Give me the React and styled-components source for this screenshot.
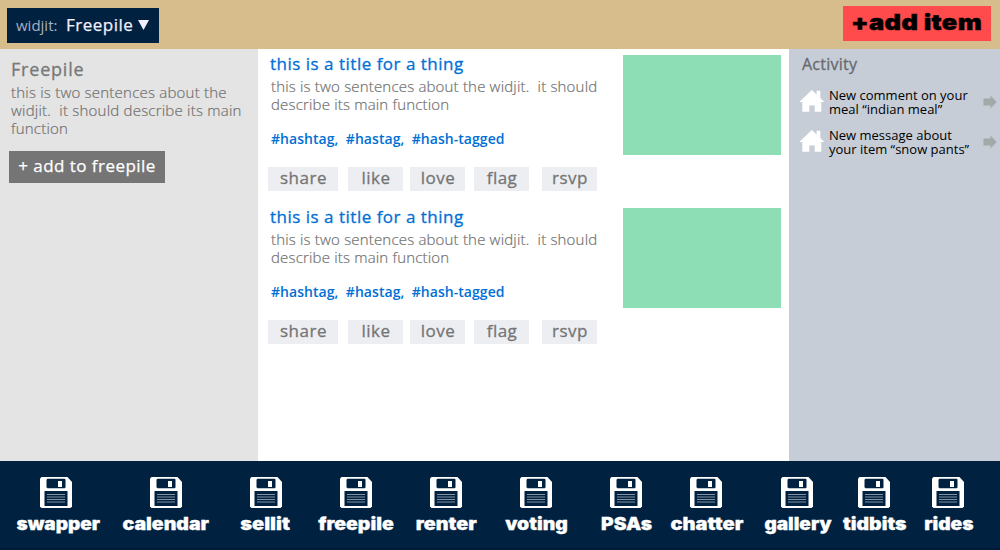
import React from "react";
import styled, { createGlobalStyle } from "styled-components";

const GlobalStyle = createGlobalStyle`
  * { box-sizing: border-box; }
  body { margin: 0; font-family: "Open Sans", "Noto Sans", sans-serif; }
  h1, h2, p { margin: 0; }
  button { border: 0; padding: 0; font: inherit; display: block; white-space: nowrap; }
`;

const Page = styled.div`
  width: 1000px;
  height: 550px;
  overflow: hidden;
  display: flex;
  flex-direction: column;
  background: #fff;
`;

const TopBar = styled.header`
  height: 49px;
  flex: none;
  display: flex;
  justify-content: space-between;
  align-items: flex-start;
  padding: 6px 9px 0 7px;
  background: #d7bc8c;
`;

const WidjitPicker = styled.button`
  width: 152px;
  height: 35px;
  margin-top: 2px;
  display: flex;
  align-items: center;
  padding: 0 0 2px 9px;
  text-align: left;
  background: #00213f;
  color: #f2effc;
  font-size: 17px;
  letter-spacing: 0.5px;
  -webkit-text-stroke: 0.25px;
`;

const PickerPrefix = styled.span`
  width: 50px;
  padding-top: 1px;
  font-size: 15px;
  letter-spacing: 0;
  color: #a8b0c0;
  -webkit-text-stroke: 0;
`;

const PickerArrow = styled.svg`
  width: 11px;
  height: 10px;
  margin: 1px 0 0 5px;
  fill: #f2effc;
`;

const AddItem = styled.button`
  width: 148px;
  height: 35px;
  padding-bottom: 2px;
  background: #ff4b4b;
  color: #000;
  font-family: Inter, "Liberation Sans", sans-serif;
  font-weight: 900;
  font-size: 22px;
  line-height: 33px;
  letter-spacing: 0.3px;
`;

const AddItemText = styled.span`
  display: inline-block;
  transform: scaleX(1.16);
  -webkit-text-stroke: 0.4px;
`;

const Columns = styled.div`
  height: 412px;
  flex: none;
  display: flex;
`;

const Sidebar = styled.aside`
  width: 258px;
  padding: 8px 0 0 11px;
  background: #e4e4e4;
  color: #787878;
`;

const SidebarTitle = styled.h1`
  margin-bottom: 2px;
  font-size: 18px;
  line-height: 24px;
  font-weight: 400;
  letter-spacing: 0.8px;
  -webkit-text-stroke: 0.3px;
`;

const Description = styled.p`
  font-size: 15px;
  line-height: 18px;
  font-weight: 300;
  color: #707070;
  white-space: pre;
  letter-spacing: ${(p) => p.$spacing || 0.18}px;
  -webkit-text-stroke: 0.2px;
`;

const AddToPile = styled.button`
  width: 156px;
  height: 32px;
  margin: 14px 0 0 -2px;
  padding-bottom: 2px;
  background: #757575;
  color: #fff;
  font-size: 17px;
  line-height: 28px;
  letter-spacing: 0.45px;
  -webkit-text-stroke: 0.25px;
`;

const Feed = styled.main`
  width: 531px;
  padding: 6px 8px 0 10px;
`;

const Post = styled.article`
  height: 153px;
  display: flex;
  justify-content: space-between;
  align-items: flex-start;
`;

const PostBody = styled.div`
  width: 340px;
  padding-left: 3px;
`;

const PostTitle = styled.h2`
  margin: -3px 0 1px -1px;
  font-size: 17px;
  line-height: 24px;
  font-weight: 400;
  letter-spacing: 0.5px;
  color: #006fd6;
  -webkit-text-stroke: 0.3px;
`;

const Tags = styled.p`
  margin-top: 17px;
  font-size: 14px;
  line-height: 18px;
  font-weight: 600;
  letter-spacing: 0.05px;
  color: #006fd6;
  white-space: pre;
`;

const Actions = styled.div`
  display: flex;
  margin: 19px 0 0 -3px;
`;

const Action = styled.button`
  width: ${(p) => p.$width}px;
  height: 24px;
  margin-right: ${(p) => p.$gap}px;
  padding: 0 0 2px 1px;
  background: #edeef2;
  color: #757575;
  font-size: 17px;
  line-height: 20px;
  letter-spacing: 0.5px;
  -webkit-text-stroke: 0.3px;
`;

const Thumb = styled.div`
  width: 158px;
  height: 100px;
  background: #8ddeb4;
`;

const ActivityPanel = styled.aside`
  width: 211px;
  padding: 5px 3px 0 12px;
  background: #c7cdd6;
`;

const ActivityTitle = styled.h2`
  padding-left: 1px;
  margin: -1px 0 11px;
  font-size: 16px;
  line-height: 22px;
  font-weight: 400;
  letter-spacing: 0.25px;
  color: #66696e;
  -webkit-text-stroke: 0.3px;
`;

const ActivityRow = styled.div`
  height: 40px;
  display: flex;
  align-items: flex-start;
`;

const HouseIcon = styled.svg`
  width: 24px;
  height: 24px;
  margin: 3px 5px 0 -1px;
  fill: #fff;
`;

const ActivityText = styled.p`
  flex: 1;
  padding-top: 2px;
  font-size: 13px;
  line-height: 14px;
  color: #000;
  white-space: pre;
`;

const ArrowIcon = styled.svg`
  width: 14px;
  height: 14px;
  margin-top: 9px;
  fill: #a3a8a9;
`;

const Dock = styled.nav`
  height: 89px;
  flex: none;
  display: flex;
  padding: 16px 0 0 16px;
  background: #00213f;
  border-bottom: 2px solid #001a38;
`;

const DockItem = styled.a`
  width: ${(p) => p.$width}px;
  margin-right: ${(p) => p.$gap}px;
  flex: none;
  display: flex;
  flex-direction: column;
  align-items: center;
`;

const DockLabel = styled.span`
  margin-top: 5px;
  font-family: Inter, "Liberation Sans", sans-serif;
  font-size: 17px;
  line-height: 22px;
  font-weight: 900;
  white-space: nowrap;
  color: #fff;
  transform: scaleX(${(p) => p.$stretch});
  -webkit-text-stroke: 0.3px;
`;

const FloppyIcon = styled.svg`
  width: 32px;
  height: 31px;
  flex: none;
  margin-left: ${(p) => p.$shift || 0}px;
`;

const Floppy = ({ shift }) => (
  <FloppyIcon viewBox="0 0 32 31" $shift={shift}>
    <path d="M1.5 0H27.5L32 5V29.5L30.5 31H1.5L0 29.5V1.5Z" fill="#fff" />
    <path d="M7.5 1.7H24.7L25.5 2.5V10.5L24.7 11.3H7.5L6.5 10.3V2.7Z" fill="#00213f" />
    <rect x="18" y="4" width="4" height="6" fill="#fff" />
    <rect x="4.5" y="14" width="23" height="15" fill="#00213f" />
    <path d="M7 17.5H25M7 20H25M7 22.5H25M7 25H25" stroke="#8292a1" strokeWidth="1.2" />
  </FloppyIcon>
);

const actions = [
  ["share", 70, 10],
  ["like", 55, 7],
  ["love", 55, 9],
  ["flag", 55, 13],
  ["rsvp", 55, 0],
];

const activity = [
  "New comment on your\nmeal “indian meal”",
  "New message about\nyour item “snow pants”",
];

const dock = [
  { name: "swapper", width: 84, gap: 22, shift: -4, stretch: 1.12 },
  { name: "calendar", width: 87, gap: 31, shift: 1, stretch: 1.147 },
  { name: "sellit", width: 50, gap: 28, shift: 2, stretch: 1.18 },
  { name: "freepile", width: 76, gap: 22, stretch: 1.145 },
  { name: "renter", width: 60, gap: 29, stretch: 1.16 },
  { name: "voting", width: 62, gap: 34, stretch: 1.14 },
  { name: "PSAs", width: 51, gap: 18, shift: -1, stretch: 1.13 },
  { name: "chatter", width: 73, gap: 21, shift: -1, stretch: 1.18 },
  { name: "gallery", width: 67, gap: 12, shift: -1, stretch: 1.12 },
  { name: "tidbits", width: 63, gap: 18, shift: -1, stretch: 1.145 },
  { name: "rides", width: 49, gap: 0, shift: -1, stretch: 1.13 },
];

export default function App() {
  return (
    <Page>
      <GlobalStyle />
      <TopBar>
        <WidjitPicker>
          <PickerPrefix>widjit:</PickerPrefix>
          Freepile
          <PickerArrow viewBox="0 0 11 10">
            <path d="M0 0H11L5.5 10Z" />
          </PickerArrow>
        </WidjitPicker>
        <AddItem>
          <AddItemText>+add item</AddItemText>
        </AddItem>
      </TopBar>
      <Columns>
        <Sidebar>
          <SidebarTitle>Freepile</SidebarTitle>
          <Description $spacing={0.22}>{"this is two sentences about the\nwidjit.  it should describe its main\nfunction"}</Description>
          <AddToPile>+ add to freepile</AddToPile>
        </Sidebar>
        <Feed>
          {[0, 1].map((n) => (
            <Post key={n}>
              <PostBody>
                <PostTitle>this is a title for a thing</PostTitle>
                <Description>{"this is two sentences about the widjit.  it should\ndescribe its main function"}</Description>
                <Tags>{"#hashtag,  #hastag,  #hash-tagged"}</Tags>
                <Actions>
                  {actions.map(([name, width, gap]) => (
                    <Action key={name} $width={width} $gap={gap}>{name}</Action>
                  ))}
                </Actions>
              </PostBody>
              <Thumb />
            </Post>
          ))}
        </Feed>
        <ActivityPanel>
          <ActivityTitle>Activity</ActivityTitle>
          {activity.map((text) => (
            <ActivityRow key={text}>
              <HouseIcon viewBox="0 0 24 24">
                <path d="M11.8 1L16.6 5.6V1.7H20.3V9L23.7 12.3V13H21.3V22.7H14.7V16.5H9.3V22.7H2.3V13H0V12.3Z" />
              </HouseIcon>
              <ActivityText>{text}</ActivityText>
              <ArrowIcon viewBox="0 0 14 14">
                <path d="M0.5 3.5H7.5V0.5L13.7 7L7.5 13.5V10.5H0.5Z" />
              </ArrowIcon>
            </ActivityRow>
          ))}
        </ActivityPanel>
      </Columns>
      <Dock>
        {dock.map((d) => (
          <DockItem key={d.name} $width={d.width} $gap={d.gap}>
            <Floppy shift={d.shift} />
            <DockLabel $stretch={d.stretch}>{d.name}</DockLabel>
          </DockItem>
        ))}
      </Dock>
    </Page>
  );
}
